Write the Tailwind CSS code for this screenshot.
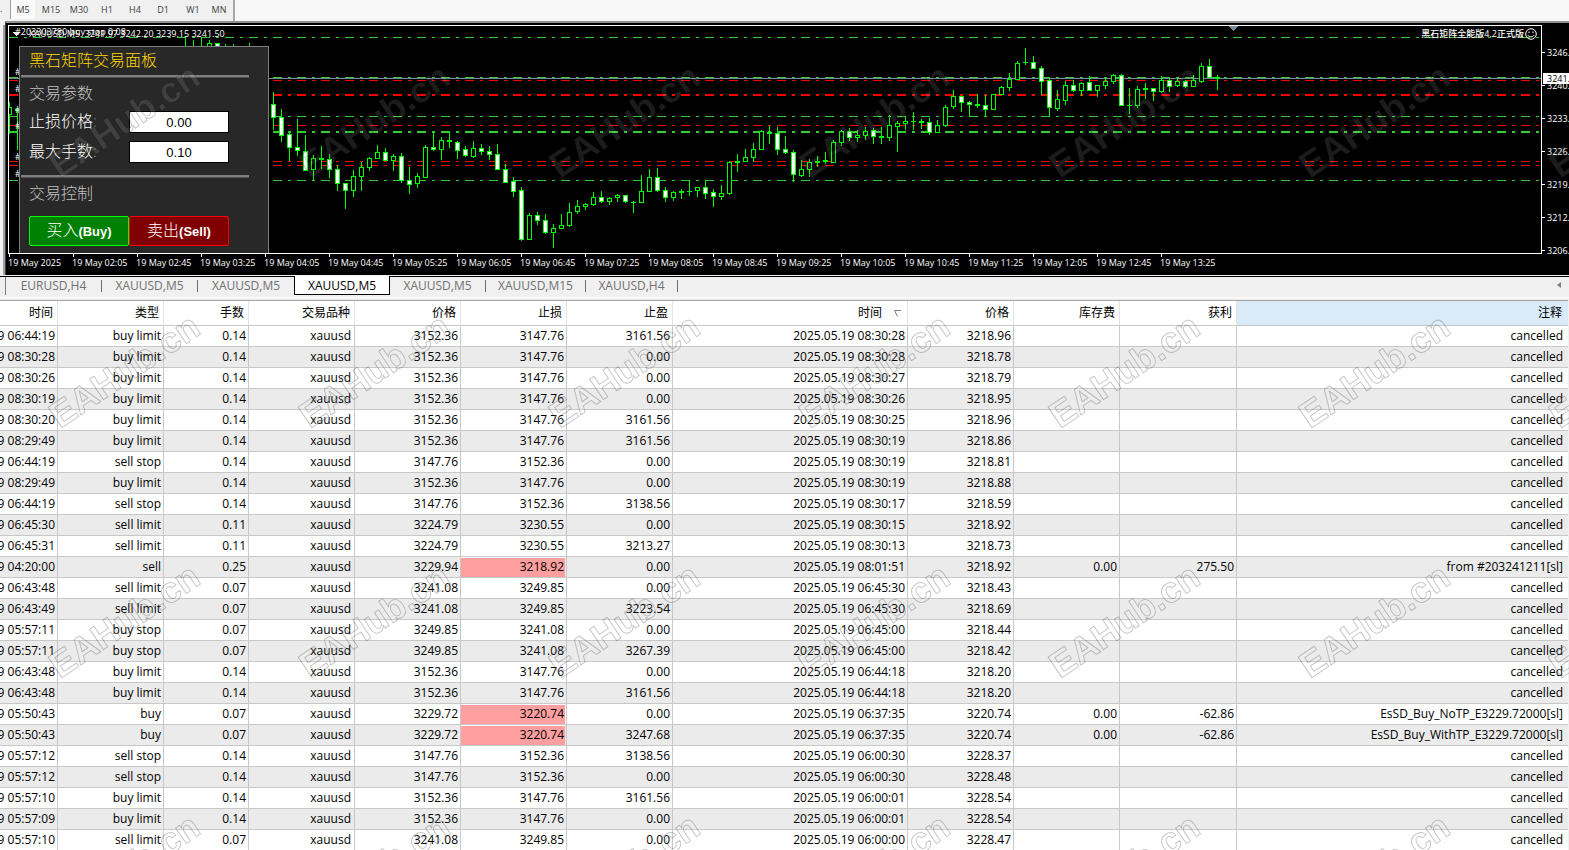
<!DOCTYPE html>
<html lang="zh-CN">
<head>
<meta charset="utf-8">
<title>XAUUSD,M5</title>
<script src="https://cdn.jsdelivr.net/npm/@tailwindcss/browser@4"></script>
</head>
<body class="relative h-screen overflow-hidden bg-[#f0f0f0] font-['Open_Sans','Noto_Sans_CJK_SC',sans-serif] text-black">
<div class="flex h-full flex-col">

  <!-- Timeframe toolbar -->
  <nav class="flex h-[21px] shrink-0 bg-[#f8f8f8] text-[9px] font-medium text-[#404040]" aria-label="Timeframes">
    <div class="flex border-r-2 border-[#a8a8a8] bg-[#f0f0f0] pr-0.5 pb-0.5">
      <span class="w-[11px] overflow-hidden border-r border-[#a0a0a0] leading-[18px]">.</span>
      <button class="w-6 bg-[#fafafa]">M5</button>
      <button class="w-8">M15</button>
      <button class="w-6">M30</button>
      <button class="w-8">H1</button>
      <button class="w-6">H4</button>
      <button class="w-8">D1</button>
      <button class="w-7">W1</button>
      <button class="w-6">MN</button>
    </div>
  </nav>

  <!-- Chart window -->
  <div class="flex h-[256px] shrink-0 border-b border-black pb-px">
    <div class="mt-1 w-[5px] shrink-0 border-r-2 border-[#a0a0a0] bg-[#f0f0f0]"></div>
    <div class="flex min-w-0 flex-1 flex-col border-t-2 border-l border-t-[#909090] border-l-[#404040] bg-black pt-[2px] pl-[2px] font-medium text-white">
      <div class="flex h-[229px]">
        <div class="relative min-w-0 flex-1 overflow-hidden border border-white">
          <svg class="block h-full w-full" shape-rendering="crispEdges" role="img" aria-label="XAUUSD M5 chart">
            <g id="levels" transform="translate(-9,-26)"></g>
            <g id="candles" transform="translate(-9,-26)" fill="white" stroke="#00ff00"></g>
            <path d="M1219 0h10l-5 5z" fill="#778899"/>
            <path d="M3 6h8l-4 4z" fill="white"/>
            <g id="marks" transform="translate(-9,-26)" fill="white" font-size="9"></g>
          </svg>
          <p class="absolute top-0 left-5 text-[9px] leading-4 whitespace-nowrap">XAUUSD,M5&nbsp; 3241.97 3242.20 3239.15 3241.50</p>
          <p class="absolute -top-0.5 left-1.5 text-[9px] leading-4 whitespace-nowrap">#203303780 buy stop 0.08</p>
          <div class="absolute top-0.5 right-1 flex items-center gap-px">
            <span class="text-[9px] leading-3">黑石矩阵全能版4.2正式版</span>
            <svg class="size-3" viewBox="0 0 12 12" fill="none" stroke="white"><circle cx="6" cy="6" r="5.3"/><path d="M3 7.2c1 2.2 5 2.2 6 0M4 3.5v1.6M8 3.5v1.6"/></svg>
          </div>

          <!-- Trading panel -->
          <form class="absolute top-5 left-2.5 h-[220px] w-[250px] border border-[#808080] bg-[#282828] px-[9px] text-[16px] font-light">
            <h1 class="h-[28px] text-[16px] leading-[26px] text-[#ffd700]">黑石矩阵交易面板</h1>
            <hr class="-ml-2 w-[228px] border-t-2 border-b border-t-[#808080] border-b-[#505050]">
            <h2 class="h-[33px] text-[16px] leading-[31px] text-[#c0c0c0]">交易参数</h2>
            <div class="flex h-[30px] w-[200px] items-start justify-between">
              <label for="sl" class="leading-5">止损价格<span class="text-[#6f8fa8]">:</span></label>
              <input id="sl" value="0.00" class="h-[22px] w-[100px] border border-black bg-white text-center font-['Liberation_Sans'] text-[13px] font-normal text-black">
            </div>
            <div class="flex h-[34px] w-[200px] items-start justify-between">
              <label for="lots" class="leading-5">最大手数<span class="text-[#6f8fa8]">:</span></label>
              <input id="lots" value="0.10" class="h-[22px] w-[100px] border border-black bg-white text-center font-['Liberation_Sans'] text-[13px] font-normal text-black">
            </div>
            <hr class="-ml-2 w-[228px] border-t-2 border-b border-t-[#808080] border-b-[#505050]">
            <h2 class="h-[38px] text-[16px] leading-[31px] text-[#c0c0c0]">交易控制</h2>
            <div class="flex w-[200px] text-[16px] leading-[26px]">
              <button type="button" class="h-[30px] flex-1 rounded-xs border border-[#00ff00] bg-[#008000]">买入<b class="font-['Liberation_Sans'] text-[13px] font-bold">(Buy)</b></button>
              <button type="button" class="h-[30px] flex-1 rounded-xs border border-[#ff0000] bg-[#800000]">卖出<b class="font-['Liberation_Sans'] text-[13px] font-bold">(Sell)</b></button>
            </div>
          </form>
        </div>
        <!-- Price scale -->
        <div class="relative w-[27px] text-[9px]">
          <div id="prices" class="pt-[11px]"></div>
          <div class="absolute top-[48px] left-px w-full bg-white pl-1 leading-[11px] text-black">3241.</div>
        </div>
      </div>
      <div id="times" class="flex h-5 overflow-hidden text-[9px] whitespace-nowrap"></div>
    </div>
  </div>

  <!-- Chart tabs -->
  <div class="flex h-[21px] shrink-0 border-b border-white bg-[#f0f0f0] pb-0.5 pl-[5px] text-[12px] text-[#707070]">
    <div class="flex items-center border-l border-[#808080]">
      <button class="w-24 border-r border-[#707070] leading-3">EURUSD,H4</button>
      <button class="w-24 border-r border-[#707070] leading-3">XAUUSD,M5</button>
      <button class="w-24 leading-3">XAUUSD,M5</button>
      <button class="-mt-px h-[19px] w-24 border-x border-b border-black bg-white leading-[17px] text-black">XAUUSD,M5</button>
      <button class="w-24 border-r border-[#707070] leading-3">XAUUSD,M5</button>
      <button class="w-[100px] border-r border-[#707070] leading-3">XAUUSD,M15</button>
      <button class="w-[92px] border-r border-[#707070] leading-3">XAUUSD,H4</button>
    </div>
    <svg class="mt-1 mr-2 ml-auto h-2 w-1" viewBox="0 0 4 8"><path d="M4 1v6L0 4z" fill="#808080"/></svg>
  </div>

  <!-- Account history -->
  <div class="min-h-0 flex-1 overflow-hidden pt-0.5 pr-px">
    <table class="w-full table-fixed border-separate border-spacing-0 border-t border-[#a0a0a0] bg-white text-right text-[12px] whitespace-nowrap">
      <colgroup><col class="w-[58px]"><col class="w-[106px]"><col class="w-[85px]"><col class="w-[106px]"><col class="w-[106px]"><col class="w-[106px]"><col class="w-[106px]"><col class="w-[235px]"><col class="w-[106px]"><col class="w-[106px]"><col class="w-[117px]"><col></colgroup>
      <thead id="head"></thead>
      <tbody id="rows"></tbody>
    </table>
  </div>
</div>

<!-- Watermark -->
<svg class="pointer-events-none absolute inset-0 h-full w-full" aria-hidden="true">
  <defs>
    <pattern id="wm" width="250" height="250" patternUnits="userSpaceOnUse">
      <text transform="translate(60,179) rotate(-34)" font-family="Liberation Sans" font-weight="bold" font-size="36" fill="#ffffff" fill-opacity=".11" stroke="#000000" stroke-opacity=".22" stroke-linejoin="round">EAHub.cn</text>
    </pattern>
  </defs>
  <rect width="100%" height="100%" fill="url(#wm)"/>
</svg>

<script>
const $ = id => document.getElementById(id);

// Horizontal order levels: [y, colour, thickness]
const G = '#32cd32', R = '#ff0000';
$('levels').innerHTML = [[37,G,1],[77,G,1],[80,R,1],[94,R,2],[116,G,1],[125,R,1],[131,G,2],[161,R,1],[165,R,1],[180,G,1]]
  .map(([y,c,w]) => `<line x1="9" x2="1540" y1="${y + w/2}" y2="${y + w/2}" stroke="${c}" stroke-width="${w}" stroke-dasharray="9 6 3 6"/>`).join('')
  + '<line x1="9" x2="3000" y1="78.5" y2="78.5" stroke="#778899"/>';

// Candles, one every 8px: high, body top, body bottom, low, kind (f = filled, h = hollow, d = doji)
const data = `92 104 117 130 f|109 117 135 142 f|132 134 147 161 f|119 147 150 156 f|135 151 170 171 f|155 158 169 180 h|146 158 159 169 d|154 159 169 178 f|165 169 183 191 f|183 183 190 209 f|170 176 190 197 h|162 167 176 191 h|157 158 167 171 h|145 152 158 159 h|148 152 160 161 f|154 156 160 171 h|153 156 180 183 f|167 180 184 194 f|173 176 183 188 h|145 147 177 178 h|132 147 149 151 f|137 140 149 160 h|132 140 141 148 d|141 142 150 159 f|146 149 155 157 f|141 148 156 158 h|144 148 151 155 f|146 151 154 160 f|144 154 169 170 f|164 169 182 183 f|177 181 191 197 f|187 190 239 241 f|213 215 239 240 h|212 215 220 225 f|214 220 232 234 f|224 228 232 248 h|214 225 228 229 h|203 212 225 227 h|200 206 211 214 h|203 204 206 210 h|192 197 204 206 h|191 197 201 203 f|197 198 201 205 h|194 195 197 202 h|195 195 201 203 f|201 202 202 213 d|175 191 202 203 h|169 177 191 192 h|168 177 190 192 f|187 190 197 202 f|191 192 197 201 h|189 191 192 199 d|180 191 191 196 d|187 187 190 197 h|180 187 193 199 f|189 192 196 207 f|185 193 196 200 h|161 162 193 195 h|154 161 162 172 d|149 157 161 162 h|143 149 157 162 h|130 131 149 150 h|126 132 133 144 d|127 133 149 155 f|136 149 152 154 f|150 152 174 182 f|160 169 175 177 h|159 162 169 177 h|156 161 162 167 d|152 160 161 164 d|140 142 162 163 h|130 131 142 146 h|128 131 137 141 f|130 135 137 142 h|127 131 135 140 h|128 130 136 144 f|127 136 137 144 d|115 125 137 141 h|121 123 126 152 h|116 121 123 130 h|112 121 121 130 d|119 121 122 129 d|118 122 132 135 f|120 125 132 133 h|105 107 125 127 h|90 96 106 109 h|96 96 102 112 f|101 102 104 117 f|94 104 105 108 d|95 105 109 117 f|94 94 109 110 h|86 87 94 95 h|73 79 87 91 h|61 63 79 80 h|48 62 62 65 d|56 62 68 69 f|66 68 81 95 f|77 80 107 117 f|90 99 108 111 h|81 85 100 105 h|80 85 90 92 f|82 83 90 96 h|76 82 90 91 f|85 85 90 97 h|78 81 85 89 h|74 75 81 84 h|74 75 105 106 f|88 105 105 114 d|86 89 105 108 h|83 88 89 99 d|88 88 91 101 f|76 80 91 93 h|78 80 86 92 f|77 81 85 87 h|80 81 86 88 f|75 80 86 87 h|63 66 81 83 h|59 66 77 78 f|75 77 78 90 d`;
const early = [[185,37,46,46,46,'d'],[193,40,46,46,46,'d'],[201,37,46,46,46,'d'],[209,40,43,50,50,'h'],[217,43,43,50,50,'f'],[225,44,46,46,46,'d'],[233,44,46,46,46,'d'],[249,43,46,46,46,'d'],[9,102,107,114,134,'h'],[17,108,109,110,150,'d']];
const bars = early.concat(data.split('|').map((s,i) => { const p = s.split(' '); return [273 + i*8, +p[0], +p[1], +p[2], +p[3], p[4]]; }));
$('candles').innerHTML = bars.map(([x,hi,t,b,lo,k]) =>
  `<path d="M${x+.5} ${hi}V${lo}"/>` + (k === 'd'
    ? `<rect x="${x-2}" y="${t}" width="5" height="${b-t+1}" fill="#00ff00" stroke="none"/>`
    : `<rect x="${x-1.5}" y="${t+.5}" width="4" height="${b-t}" fill="${k === 'h' ? '#000' : '#fff'}"/>`)).join('');
$('marks').innerHTML = [75,92,113,129,160,177].map(y => `<text x="15" y="${y}">#</text>`).join('');

// Axes
$('prices').innerHTML = [3246,3240,3233,3226,3219,3212,3206].map((p,i) =>
  `<div class="flex h-[33px] items-start leading-[33px] last:h-5"><span class="mt-4 mr-0.5 h-px w-[3px] shrink-0 bg-white"></span>${p}.</div>`).join('');
$('times').innerHTML = ['2025','02:05','02:45','03:25','04:05','04:45','05:25','06:05','06:45','07:25','08:05','08:45','09:25','10:05','10:45','11:25','12:05','12:45','13:25'].map(t =>
  `<div class="w-16 shrink-0 leading-3"><div class="ml-px h-[3px] w-px bg-white"></div>19 May ${t}</div>`).join('');

// History table
$('head').innerHTML = '<tr>' + ['时间','类型','手数','交易品种','价格','止损','止盈','时间','价格','库存费','获利','注释'].map((h,i) =>
  i === 11 ? `<th class="h-[25px] border-b border-[#c8c8c8] bg-[#d9ebf9] pr-1.5 font-normal">${h}</th>`
  : i === 7 ? `<th class="h-[25px] border-r border-b border-[#c8c8c8] border-r-[#e5e5e5] font-normal"><span class="flex items-center justify-end gap-3 pr-1.5">${h}<svg class="size-[7px]" viewBox="0 0 7 7" fill="none" stroke="#808080"><path d="M7 .5H.5l3 6"/></svg></span></th>`
  : `<th class="h-[25px] border-r border-b border-[#c8c8c8] border-r-[#e5e5e5] pr-1 font-normal">${h}</th>`).join('') + '</tr>';
const L = 'buy limit', T = 'sell stop', M = 'sell limit', B = 'buy stop', a = '3152.36', b = '3147.76', z = '0.00', c = 'cancelled';
const orders = [
 ['06:44:19',L,'0.14',a,b,'3161.56','08:30:28','3218.96'],
 ['08:30:28',L,'0.14',a,b,z,'08:30:28','3218.78'],
 ['08:30:26',L,'0.14',a,b,z,'08:30:27','3218.79'],
 ['08:30:19',L,'0.14',a,b,z,'08:30:26','3218.95'],
 ['08:30:20',L,'0.14',a,b,'3161.56','08:30:25','3218.96'],
 ['08:29:49',L,'0.14',a,b,'3161.56','08:30:19','3218.86'],
 ['06:44:19',T,'0.14',b,a,z,'08:30:19','3218.81'],
 ['08:29:49',L,'0.14',a,b,z,'08:30:19','3218.88'],
 ['06:44:19',T,'0.14',b,a,'3138.56','08:30:17','3218.59'],
 ['06:45:30',M,'0.11','3224.79','3230.55',z,'08:30:15','3218.92'],
 ['06:45:31',M,'0.11','3224.79','3230.55','3213.27','08:30:13','3218.73'],
 ['04:20:00','sell','0.25','3229.94','3218.92',z,'08:01:51','3218.92',z,'275.50','from #203241211[sl]'],
 ['06:43:48',M,'0.07','3241.08','3249.85',z,'06:45:30','3218.43'],
 ['06:43:49',M,'0.07','3241.08','3249.85','3223.54','06:45:30','3218.69'],
 ['05:57:11',B,'0.07','3249.85','3241.08',z,'06:45:00','3218.44'],
 ['05:57:11',B,'0.07','3249.85','3241.08','3267.39','06:45:00','3218.42'],
 ['06:43:48',L,'0.14',a,b,z,'06:44:18','3218.20'],
 ['06:43:48',L,'0.14',a,b,'3161.56','06:44:18','3218.20'],
 ['05:50:43','buy','0.07','3229.72','3220.74',z,'06:37:35','3220.74',z,'-62.86','EsSD_Buy_NoTP_E3229.72000[sl]'],
 ['05:50:43','buy','0.07','3229.72','3220.74','3247.68','06:37:35','3220.74',z,'-62.86','EsSD_Buy_WithTP_E3229.72000[sl]'],
 ['05:57:12',T,'0.14',b,a,'3138.56','06:00:30','3228.37'],
 ['05:57:12',T,'0.14',b,a,z,'06:00:30','3228.48'],
 ['05:57:10',L,'0.14',a,b,'3161.56','06:00:01','3228.54'],
 ['05:57:09',L,'0.14',a,b,z,'06:00:01','3228.54'],
 ['05:57:10',M,'0.07','3241.08','3249.85',z,'06:00:00','3228.47']];
$('rows').innerHTML = orders.map(o => {
  const [open,type,lots,price,sl,tp,close,cp,swap = '',profit = '',note = c] = o;
  const cells = ['9 ' + open,type,lots,'xauusd',price,sl,tp,'2025.05.19 ' + close,cp,swap,profit,note];
  return '<tr class="even:bg-[#ebebeb]">' + cells.map((v,i) =>
    i === 11 ? `<td class="h-[21px] border-b border-[#c8c8c8] pr-[5px] leading-5">${v}</td>`
    : i === 0 ? `<td class="h-[21px] border-r border-b border-[#c8c8c8] pr-0.5 leading-5"><span class="flex justify-end">${v}</span></td>`
    : i === 5 && o.length > 8 ? `<td class="h-[21px] border-r border-b border-[#c8c8c8] leading-[18px]"><span class="mr-px block h-5 border-t border-white bg-[#ff9f9f] pr-px">${v}</span></td>`
    : i === 3 ? `<td class="h-[21px] border-r border-b border-[#c8c8c8] pr-[3px] leading-5">${v}</td>`
    : `<td class="h-[21px] border-r border-b border-[#c8c8c8] pr-0.5 leading-5">${v}</td>`).join('') + '</tr>';
}).join('');
</script>
</body>
</html>
